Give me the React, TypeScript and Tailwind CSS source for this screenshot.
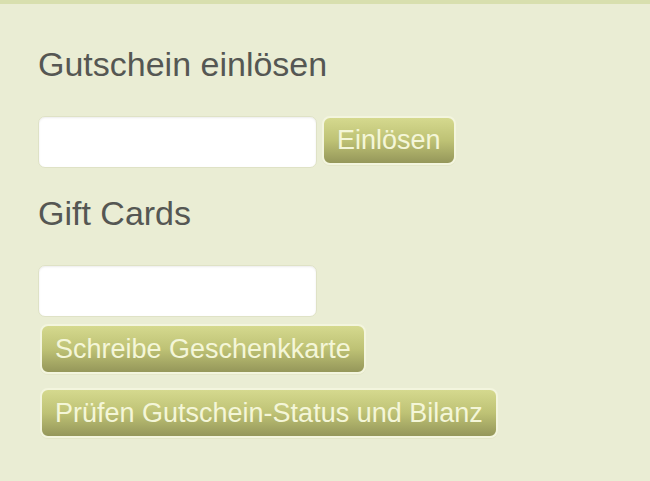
const btn =
  "rounded-[8px] border-2 border-[#f3f5de] bg-gradient-to-b from-[#d5d98e] via-[#bec275] to-[#95975a] text-[#f4f6d8] text-[27px] leading-none px-[13px] shadow-[0_1px_0_#e4e6c8]";

const input =
  "block w-[279px] h-[52px] rounded-[7px] border border-[#dfe2c6] bg-white shadow-[inset_0_1px_2px_rgba(0,0,0,0.08)] outline-none";

const App = () => {
  return (
    <div
      className="w-[650px] h-[481px] bg-[#eaedd4] border-t-[4px] border-[#d8dfae] overflow-hidden"
      style={{ fontFamily: '"Liberation Sans", Arial, sans-serif' }}
    >
      <div className="pl-[38px] pt-[43px]">
        <h2 className="text-[34px] leading-none text-[#555753]">Gutschein einlösen</h2>

        <div className="flex items-start gap-[5px] mt-[35px]">
          <input type="text" className={input} />
          <button className={`${btn} h-[49px]`}>Einlösen</button>
        </div>

        <h2 className="text-[34px] leading-none text-[#555753] mt-[28px]">Gift Cards</h2>

        <input type="text" className={`${input} mt-[35px]`} />
        <button className={`${btn} h-[50px] mt-[7px] ml-[2px] block`}>Schreibe Geschenkkarte</button>
        <button className={`${btn} h-[50px] mt-[14px] ml-[2px] block`}>
          Prüfen Gutschein-Status und Bilanz
        </button>
      </div>
    </div>
  );
};

export default App;
